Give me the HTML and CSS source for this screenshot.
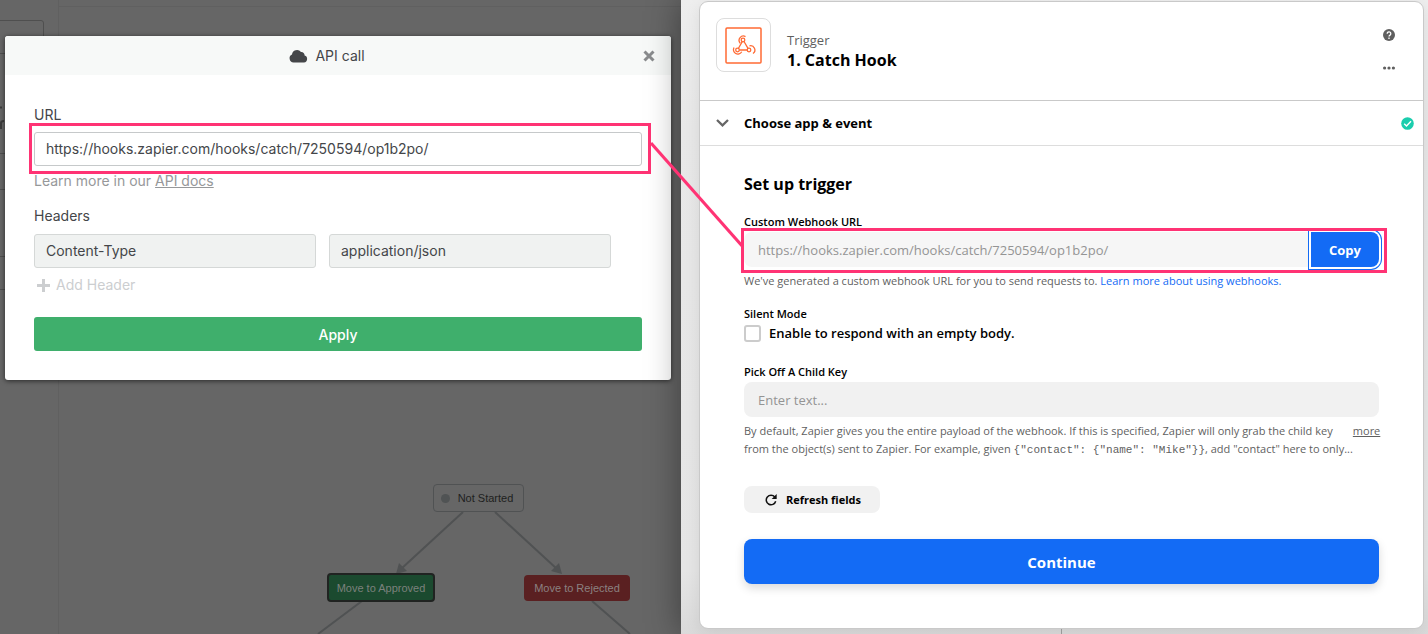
FILE: index.html
```html
<!DOCTYPE html>
<html lang="en">
<head>
    <meta charset="UTF-8">
    <meta name="viewport" content="width=device-width, initial-scale=1.0">
    <title>Catch Hook setup</title>
    <link rel="stylesheet" href="styles.css">
</head>
<body>
    <div class="split">
        <section class="workflow">
            <!-- dimmed canvas behind the dialog -->
            <svg class="canvas-lines" fill="none">
                <path d="M58.5 0V634M58 6.5H1000" stroke="#606060"/>
                <path d="M0 20.500H41Q43.500 20.500 43.500 23V53M0 53.500H43M0 153.500H20M0 189.500H20M0 256.500H20M0 289.500H20" stroke="#4f4f4f"/>
                <path d="M0 107.500H2M1 129V123Q1 121 4 121" stroke="#3c3c3c" stroke-width="2"/>
                <path d="M463 512L401 569M495 512L557 569M362 601L318 634M592 601L630 634" stroke="#505253" stroke-width="2"/>
                <path d="M396 574L399 563L407 571ZM562 574L551 571L559 563Z" fill="#505253"/>
            </svg>
            <div class="node node-start"><span class="dot"></span>Not Started</div>
            <div class="node node-approved">Move to Approved</div>
            <div class="node node-rejected">Move to Rejected</div>

            <form class="modal">
                <header class="modal-header">
                    <svg width="19" height="14" viewBox="0 0 19 14" fill="#444649"><path d="M4.500 13.500A4.200 4.200 0 0 1 3 5.500 5 5 0 0 1 12 3 3.200 3.200 0 0 1 15.600 6.500 3.600 3.600 0 0 1 15 13.500Z"/></svg>
                    <h1>API call</h1>
                    <button type="button" class="close" aria-label="Close">
                        <svg width="12" height="12" viewBox="0 0 12 12" stroke="#898b8d" stroke-width="3"><path d="M1.500 1.500L10.500 10.500M10.500 1.500L1.500 10.500"/></svg>
                    </button>
                </header>
                <div class="modal-body">
                    <label for="url">URL</label>
                    <div class="field">
                        <input type="text" id="url" value="https://hooks.zapier.com/hooks/catch/7250594/op1b2po/">
                        <div class="highlight"></div>
                    </div>
                    <p class="hint">Learn more in our <a href="#">API docs</a></p>
                    <label for="header-name">Headers</label>
                    <div class="header-row">
                        <input type="text" id="header-name" value="Content-Type">
                        <input type="text" aria-label="Header value" value="application/json">
                    </div>
                    <button type="button" class="add-header">
                        <svg width="13" height="13" viewBox="0 0 13 13" stroke="#ccced0" stroke-width="3"><path d="M6.500 0V13M0 6.500H13"/></svg>
                        Add Header
                    </button>
                    <button type="button" class="apply">Apply</button>
                </div>
            </form>
        </section>

        <section class="zap">
            <form class="card">
                <header class="card-header">
                    <div class="app-icon">
                        <svg width="37" height="37" viewBox="0 0 37 37" fill="none" stroke="#ff6b35">
                            <rect x="1" y="1" width="35" height="35" rx="1" stroke-width="1.500"/>
                            <g stroke-width="1.300">
                                <circle cx="18" cy="13" r="1.800"/>
                                <circle cx="12.500" cy="23" r="1.800"/>
                                <circle cx="24" cy="23" r="1.800"/>
                                <path d="M17.200 14.600L13.500 21.300M19 14.500L23 21.300M14.300 23H22.200"/>
                                <path d="M15.200 16.200A4.300 4.300 0 0 1 20.500 9.600"/>
                                <path d="M9 20.500A4.300 4.300 0 1 0 16.700 24.800"/>
                                <path d="M24.500 18.800A4.300 4.300 0 0 1 28 26.500"/>
                            </g>
                        </svg>
                    </div>
                    <div class="titles">
                        <p>Trigger</p>
                        <h2>1. Catch Hook</h2>
                    </div>
                    <div class="actions">
                        <button type="button" aria-label="Help">
                            <svg width="12" height="12" viewBox="0 0 12 12" fill="none"><circle cx="6" cy="6" r="6" fill="#5f5f5f"/><path d="M4.200 4.700A1.800 1.800 0 1 1 7 6.100Q6 6.700 6 7.600M6 8.600V9.900" stroke="#fff" stroke-width="1.300"/></svg>
                        </button>
                        <button type="button" aria-label="More options">
                            <svg width="12" height="4" viewBox="0 0 12 4" fill="#5f5f5f"><circle cx="1.600" cy="2" r="1.600"/><circle cx="6" cy="2" r="1.600"/><circle cx="10.400" cy="2" r="1.600"/></svg>
                        </button>
                    </div>
                </header>
                <button type="button" class="step">
                    <svg width="13" height="8" viewBox="0 0 13 8" fill="none" stroke="#666" stroke-width="2.300"><path d="M1 1L6.500 6.300L12 1"/></svg>
                    <span>Choose app &amp; event</span>
                    <svg class="done" width="13" height="13" viewBox="0 0 13 13" fill="none"><circle cx="6.500" cy="6.500" r="6.300" fill="#1bcdad"/><path d="M3.200 6.700L5.500 9L10 4.200" stroke="#fff" stroke-width="1.400"/></svg>
                </button>
                <div class="card-body">
                    <h3>Set up trigger</h3>
                    <label class="caption" for="webhook">Custom Webhook URL</label>
                    <div class="field copy-field">
                        <input type="text" id="webhook" value="https://hooks.zapier.com/hooks/catch/7250594/op1b2po/" readonly>
                        <button type="button" class="copy">Copy</button>
                        <div class="highlight"></div>
                    </div>
                    <p class="help">We've generated a custom webhook URL for you to send requests to. <a href="#">Learn more about using webhooks.</a></p>
                    <div class="caption silent">Silent Mode</div>
                    <label class="check"><input type="checkbox">Enable to respond with an empty body.</label>
                    <label class="caption" for="child-key">Pick Off A Child Key</label>
                    <input type="text" id="child-key" placeholder="Enter text...">
                    <div class="help-row">
                        <p class="help">By default, Zapier gives you the entire payload of the webhook. If this is specified, Zapier will only grab the child key<br>from the object(s) sent to Zapier. For example, given <code>{"contact": {"name": "Mike"}}</code>, add "contact" here to only...</p>
                        <a class="more" href="#">more</a>
                    </div>
                    <button type="button" class="refresh">
                        <svg width="12" height="12" viewBox="0 0 12 12" fill="none"><path d="M9.800 3A4.800 4.800 0 1 0 10.700 7.300" stroke="#111" stroke-width="1.500"/><path d="M11.700 0V5H6.700Z" fill="#111"/></svg>
                        Refresh fields
                    </button>
                    <button type="button" class="continue">Continue</button>
                </div>
            </form>
            <div class="stem"></div>
            <svg class="connector" width="94" height="106"><path d="M1 1L93 105" stroke="#ff3374" stroke-width="3"/></svg>
        </section>
    </div>
</body>
</html>
```
FILE: styles.css
```css
* {
    box-sizing: border-box;
}

body {
    margin: 0;
    font-family: "Open Sans", sans-serif;
}

h1, h2, h3, p {
    margin: 0;
}

button {
    border: 0;
    padding: 0;
    background: none;
    font-family: inherit;
    cursor: pointer;
}

input {
    font-family: inherit;
    margin: 0;
}

svg {
    display: block;
    flex: none;
}

.split {
    display: grid;
    grid-template-columns: minmax(0, 681fr) minmax(0, 747fr);
    min-height: 100vh;
    overflow: hidden;
}

/* left side */
.workflow {
    position: relative;
    padding: 36px 10px 0 5px;
    background-color: #666;
    font-family: Inter, sans-serif;
    overflow: hidden;
}

.canvas-lines {
    position: absolute;
    top: 0;
    left: 0;
    width: 100%;
    height: 100%;
}

.node {
    position: absolute;
    display: flex;
    align-items: center;
    justify-content: center;
    border-radius: 4px;
    font: 11px "Liberation Sans", sans-serif;
    white-space: nowrap;
}

.node-start {
    left: 433px;
    top: 484px;
    width: 91px;
    height: 28px;
    gap: 8px;
    padding-right: 3px;
    border: 1px solid #505253;
    color: #1e1f20;
}

.node-approved {
    left: 327px;
    top: 573px;
    width: 108px;
    height: 29px;
    border: 2px solid #202321;
    background-color: #1b4a2f;
    color: #7b817d;
}

.node-rejected {
    left: 524px;
    top: 575px;
    width: 106px;
    height: 26px;
    background-color: #5a2021;
    color: #8b8080;
}

.dot {
    width: 9px;
    height: 9px;
    border-radius: 50%;
    background-color: #505354;
}

.modal {
    position: relative;
    border-radius: 3px;
    background-color: #fff;
    box-shadow: 0 1px 5px rgba(0, 0, 0, 0.6);
    color: #444649;
    font-size: 14px;
}

.modal-header {
    display: flex;
    align-items: center;
    justify-content: center;
    gap: 7px;
    height: 39px;
    padding-right: 22px;
    border-radius: 3px 3px 0 0;
    background-color: #f7f9f8;
    position: relative;
}

.modal-header h1 {
    font-size: 14px;
    font-weight: 400;
}

.close {
    position: absolute;
    right: 16px;
    top: 14px;
}

.modal-body {
    padding: 30px 29px 29px;
}

.modal-body label {
    display: block;
    margin-bottom: 7px;
    line-height: 20px;
}

.modal-body input {
    width: 100%;
    height: 34px;
    padding: 0 11px 1px;
    border: 1px solid #c6c9ca;
    border-radius: 3px;
    background-color: #fff;
    color: #444649;
    font-size: 14px;
}

.field {
    position: relative;
}

.highlight {
    position: absolute;
    inset: -9px -9px -8px -5px;
    border: 3px solid #ff3374;
    pointer-events: none;
}

.hint {
    margin: 5px 0 15px;
    color: #96989a;
    line-height: 20px;
}

.hint a {
    color: inherit;
}

.header-row {
    display: flex;
    gap: 13px;
    padding: 1px 31px 7px 0;
}

.header-row input {
    background-color: #f0f2f1;
    border-color: #d5d8d7;
}

.add-header {
    display: flex;
    align-items: center;
    gap: 6px;
    padding-left: 3px;
    color: #ccced0;
    font-size: 14px;
    line-height: 20px;
}

.apply {
    display: block;
    width: 100%;
    height: 34px;
    margin-top: 22px;
    border-radius: 3px;
    background-color: #3faf6c;
    color: #fff;
    font-size: 14px;
    font-weight: 500;
}

/* right side */
.zap {
    position: relative;
    padding: 1px 4px 0 18px;
    background: linear-gradient(#eee, #e8e8e8 20%, #e5e5e5 90%, #dadada);
    box-shadow: 0 0 32px rgba(0, 0, 0, 0.4);
}

.card {
    border: 1px solid #c9c9c9;
    border-radius: 9px;
    background-color: #fff;
    box-shadow: 0 4px 16px rgba(0, 0, 0, 0.08);
}

.card-header {
    display: flex;
    height: 99px;
    padding: 16px 28px 0 16px;
    border-bottom: 1px solid #c9c9c9;
}

.app-icon {
    display: flex;
    align-items: center;
    justify-content: center;
    width: 55px;
    height: 54px;
    border: 1px solid #ddd;
    border-radius: 8px;
}

.titles {
    flex: 1;
    padding: 12px 16px;
}

.titles p {
    color: #5f5f5f;
    font-size: 13px;
    line-height: 20px;
}

.titles h2, .card-body h3 {
    font-size: 16px;
    font-weight: 700;
    line-height: 20px;
}

.actions {
    display: flex;
    flex-direction: column;
    align-items: center;
    gap: 25px;
    padding-top: 11px;
}

.step {
    display: flex;
    align-items: center;
    width: 100%;
    height: 45px;
    padding: 0 9px 0 16px;
    gap: 15px;
    border-bottom: 1px solid #ddd;
    color: #000;
    font-size: 13px;
    font-weight: 700;
}

.done {
    margin-left: auto;
}

.card-body {
    padding: 28px 44px 44px;
}

.card-body h3 {
    margin-bottom: 20px;
}

.caption {
    display: block;
    margin-bottom: 2px;
    font-size: 11px;
    font-weight: 600;
    line-height: 16px;
}

.card-body input[type="text"] {
    display: block;
    width: 100%;
    height: 35px;
    padding: 0 14px;
    border: 0;
    border-radius: 8px;
    background-color: #f1f1f1;
    color: #949494;
    font-size: 13px;
    font-weight: 500;
}

.card-body input::placeholder {
    color: #949494;
}

.card-body .copy-field {
    display: flex;
}

.card-body .copy-field input {
    border-radius: 8px 0 0 8px;
    background-color: #f6f6f6;
}

.copy-field .highlight {
    inset: -4px -8px -6px -3px;
}

.copy {
    flex: none;
    width: 68px;
    border-radius: 0 8px 8px 0;
    background-color: #136bf5;
    box-shadow: 0 0 0 2px #fff, 0 0 0 3px #136bf5;
    color: #fff;
    font-size: 13px;
    font-weight: 700;
}

.help {
    padding-top: 5px;
    color: #5f5f5f;
    font-size: 11px;
    line-height: 18px;
}

.help a {
    color: #136bf5;
    text-decoration: none;
}

.help code {
    font-family: "Liberation Mono", monospace;
    font-size: 11px;
}

.silent {
    margin-top: 16px;
}

.check {
    display: flex;
    align-items: center;
    gap: 8px;
    margin-bottom: 22px;
    font-size: 13px;
    font-weight: 600;
    line-height: 18px;
}

.check input {
    appearance: none;
    width: 17px;
    height: 17px;
    border: 2px solid #ccc;
    border-radius: 3px;
    background-color: #fff;
}

.help-row {
    display: flex;
    justify-content: space-between;
}

.help-row .help {
    white-space: nowrap;
}

.more {
    padding: 5px 1px 0 0;
    color: #5f5f5f;
    font-size: 11px;
    line-height: 18px;
}

.refresh {
    display: flex;
    align-items: center;
    gap: 9px;
    height: 27px;
    margin-top: 27px;
    padding: 0 19px 0 21px;
    border-radius: 8px;
    background-color: #f1f1f1;
    color: #000;
    font-size: 11px;
    font-weight: 700;
}

.continue {
    display: block;
    width: 100%;
    height: 45px;
    margin-top: 26px;
    border-radius: 8px;
    background-color: #136bf5;
    box-shadow: 0 4px 10px rgba(0, 0, 0, 0.15);
    color: #fff;
    font-size: 15px;
    font-weight: 700;
}

/* line down to the next step */
.stem {
    width: 1px;
    height: 5px;
    margin: 0 auto;
    background-color: #999;
}

.connector {
    position: absolute;
    top: 142px;
    left: -31px;
}
```
